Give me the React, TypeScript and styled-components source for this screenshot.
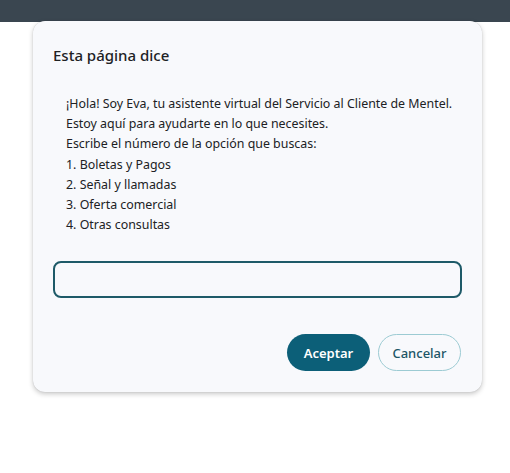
import React from "react";
import styled, { createGlobalStyle } from "styled-components";

const Global = createGlobalStyle`
  html, body { margin: 0; padding: 0; background: #ffffff; }
  body { font-family: "Noto Sans", "Open Sans", sans-serif; }
`;

const Page = styled.div`
  position: relative;
  width: 510px;
  height: 473px;
  background: #ffffff;
  overflow: hidden;
`;

const TopBar = styled.div`
  height: 22px;
  background: #3a4650;
`;

const Dialog = styled.div`
  position: absolute;
  top: 21px;
  left: 33px;
  width: 449px;
  box-sizing: border-box;
  background: #f8f9fc;
  border-radius: 12px;
  box-shadow: 0 2px 5px rgba(0, 0, 0, 0.22), 0 0 1px rgba(0, 0, 0, 0.2);
  padding: 24px 20px 21px 20px;
  display: flex;
  flex-direction: column;
`;

const Title = styled.h2`
  margin: 0;
  font-size: 15px;
  font-weight: 500;
  line-height: 20px;
  color: #202124;
`;

const Message = styled.div`
  margin: 29px 0 0 13px;
  font-size: 12.4px;
  line-height: 20.2px;
  color: #202124;
`;

const Line = styled.div`
  white-space: nowrap;
`;

const Field = styled.input`
  margin-top: 26px;
  height: 37px;
  box-sizing: border-box;
  width: 100%;
  border: 2px solid #1e5a68;
  border-radius: 8px;
  background: #f8f9fc;
  outline: none;
  font-family: inherit;
  font-size: 13px;
  padding: 0 10px;
`;

const Actions = styled.div`
  margin-top: 36px;
  display: flex;
  justify-content: flex-end;
  gap: 8px;
  padding-right: 1px;
`;

const Button = styled.button<{ $primary?: boolean }>`
  height: 37px;
  width: 83px;
  border-radius: 19px;
  font-family: inherit;
  font-size: 13px;
  font-weight: ${(p) => (p.$primary ? 600 : 500)};
  cursor: pointer;
  box-sizing: border-box;
  background: ${(p) => (p.$primary ? "#0c5f78" : "#f8f9fc")};
  color: ${(p) => (p.$primary ? "#ffffff" : "#1c5566")};
  border: ${(p) => (p.$primary ? "none" : "1px solid #9ccbd3")};
`;

const lines = [
  "¡Hola! Soy Eva, tu asistente virtual del Servicio al Cliente de Mentel.",
  "Estoy aquí para ayudarte en lo que necesites.",
  "Escribe el número de la opción que buscas:",
  "1. Boletas y Pagos",
  "2. Señal y llamadas",
  "3. Oferta comercial",
  "4. Otras consultas",
];

export default function App() {
  return (
    <Page>
      <Global />
      <TopBar />
      <Dialog>
        <Title>Esta página dice</Title>
        <Message>
          {lines.map((l) => (
            <Line key={l}>{l}</Line>
          ))}
        </Message>
        <Field type="text" />
        <Actions>
          <Button $primary>Aceptar</Button>
          <Button>Cancelar</Button>
        </Actions>
      </Dialog>
    </Page>
  );
}
